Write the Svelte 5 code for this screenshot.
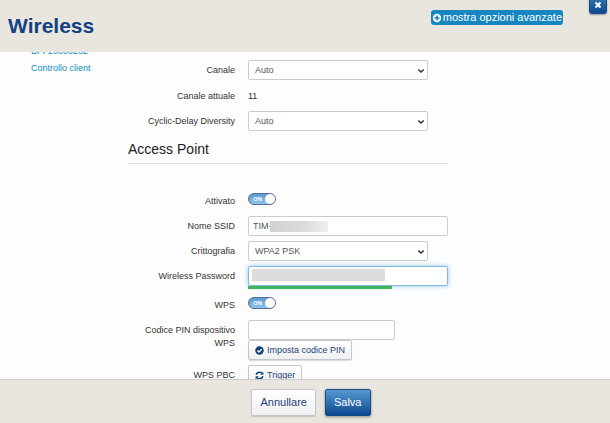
<script>
  let channel = $state('Auto');
  let diversity = $state('Auto');
  let encryption = $state('WPA2 PSK');
  let enabled = $state(true);
  let wps = $state(true);
  let ssid = $state('TIM-');
  let password = $state('');
  let pin = $state('');
  let strength = $state(72);
</script>

{#snippet chevron()}
  <svg class="chevron" viewBox="0 0 8 6" aria-hidden="true">
    <path d="M1.2 1.5 4 4l2.8-2.5" />
  </svg>
{/snippet}

<div class="modal">
  <header class="modal-header">
    <h1>Wireless</h1>
    <button type="button" class="advanced">
      <svg viewBox="0 0 12 12" aria-hidden="true">
        <circle cx="6" cy="6" r="5" />
        <path d="M6 3v6M3 6h6" />
      </svg>
      mostra opzioni avanzate
    </button>
    <button type="button" class="close" aria-label="Chiudi">
      <svg viewBox="0 0 8 8" aria-hidden="true">
        <path d="m1.5 1.5 5 5m0-5-5 5" />
      </svg>
    </button>
  </header>

  <main class="modal-body">
    <nav class="side">
      <a href="#network">BI-F20000202</a>
      <a href="#clients">Controllo client</a>
    </nav>

    <form class="settings" id="wireless-form">
      <div class="row">
        <label for="channel">Canale</label>
        <div class="select">
          <select id="channel" bind:value={channel}>
            <option>Auto</option>
          </select>
          {@render chevron()}
        </div>
      </div>
      <div class="row text-row">
        <span class="label">Canale attuale</span>
        <span class="value">11</span>
      </div>
      <div class="row">
        <label for="diversity">Cyclic-Delay Diversity</label>
        <div class="select">
          <select id="diversity" bind:value={diversity}>
            <option>Auto</option>
          </select>
          {@render chevron()}
        </div>
      </div>

      <h2>Access Point</h2>

      <div class="row">
        <label for="enabled">Attivato</label>
        <span class="switch">
          <input id="enabled" type="checkbox" bind:checked={enabled} />
          <span class="on">ON</span>
        </span>
      </div>
      <div class="row">
        <label for="ssid">Nome SSID</label>
        <div class="field">
          <input id="ssid" class="text" type="text" bind:value={ssid} />
          <span class="mask mask-ssid"></span>
        </div>
      </div>
      <div class="row">
        <label for="encryption">Crittografia</label>
        <div class="select">
          <select id="encryption" bind:value={encryption}>
            <option>WPA2 PSK</option>
          </select>
          {@render chevron()}
        </div>
      </div>
      <div class="row">
        <label for="password">Wireless Password</label>
        <div class="field">
          <input id="password" class="text active" type="text" bind:value={password} />
          <span class="mask mask-password"></span>
          <div class="meter"><div style={`width:${strength}%`}></div></div>
        </div>
      </div>
      <div class="row">
        <label for="wps">WPS</label>
        <span class="switch">
          <input id="wps" type="checkbox" bind:checked={wps} />
          <span class="on">ON</span>
        </span>
      </div>
      <div class="row">
        <label for="pin">Codice PIN dispositivo WPS</label>
        <div class="field">
          <input id="pin" class="text short" type="text" bind:value={pin} />
          <button type="button" class="btn small">
            <svg viewBox="0 0 10 10" aria-hidden="true">
              <circle class="fill" cx="5" cy="5" r="4.7" />
              <path class="tick" d="m2.7 5 1.7 1.7 3-3.2" />
            </svg>
            Imposta codice PIN
          </button>
        </div>
      </div>
      <div class="row">
        <label for="pbc">WPS PBC</label>
        <div class="field">
          <button id="pbc" type="button" class="btn small">
            <svg viewBox="0 0 10 10" aria-hidden="true">
              <path class="arrow" d="M1.2 4.2C1.8 2.3 3.2 1.3 5 1.3c1.2 0 2 .4 2.8 1.1M8.8 5.8C8.2 7.7 6.8 8.7 5 8.7c-1.2 0-2-.4-2.8-1.1" />
              <path class="fill" d="M9.3.8v3.4H5.9zM.7 9.2V5.8h3.4z" />
            </svg>
            Trigger
          </button>
        </div>
      </div>
    </form>
  </main>

  <footer class="modal-footer">
    <button type="button" class="btn">Annullare</button>
    <button type="submit" form="wireless-form" class="btn primary">Salva</button>
  </footer>
</div>

<style>
  :global(body) {
    background: #fdfdfd;
  }

  .modal {
    display: flex;
    flex-direction: column;
    height: 100vh;
    color: #333;
    font-family: 'Liberation Sans', Arial, sans-serif;
    font-size: 9px;
    line-height: 13px;
  }

  .modal * {
    box-sizing: border-box;
  }

  button,
  input,
  select {
    margin: 0;
    font-family: inherit;
    font-size: inherit;
    line-height: inherit;
  }

  button {
    cursor: pointer;
  }

  .modal-header {
    display: flex;
    align-items: flex-start;
    flex: none;
    height: 52px;
    padding: 0 3px 0 8px;
    background: #e9e6e0;
  }

  h1 {
    flex: 1;
    margin: 0;
    padding-top: 13px;
    color: #124281;
    font-size: 21px;
    line-height: 26px;
  }

  .advanced {
    display: flex;
    align-items: center;
    gap: 1px;
    height: 15px;
    margin: 10px 26px 0 0;
    padding: 0 1px;
    border: 0;
    border-radius: 3px;
    color: #fff;
    background: #1686c0;
    font-size: 11px;
  }

  .advanced svg {
    width: 10px;
    height: 10px;
  }

  .advanced circle {
    fill: #fff;
  }

  .advanced path {
    stroke: #1686c0;
    stroke-width: 2;
  }

  .close {
    display: flex;
    align-items: center;
    justify-content: center;
    width: 18px;
    height: 14px;
    padding: 0 0 3px;
    border: 1px solid #164b88;
    border-top: 0;
    border-radius: 0 0 3px 3px;
    background: linear-gradient(#2f6fae, #0d478e);
    box-shadow: 0 1px 2px rgba(0, 0, 0, 0.35);
  }

  .close svg {
    width: 8px;
    height: 8px;
  }

  .close path {
    stroke: #fff;
    stroke-width: 2;
  }

  .modal-body {
    display: flex;
    align-items: flex-start;
    flex: 1;
    min-height: 0;
    overflow: hidden;
  }

  /* list is scrolled part way under the header */
  .side {
    display: flex;
    flex-direction: column;
    gap: 4px;
    width: 128px;
    margin-top: -7px;
    padding-left: 31px;
  }

  .side a {
    color: #0f8cc2;
    text-decoration: none;
    white-space: nowrap;
  }

  .settings {
    width: 320px;
    padding-top: 8px;
  }

  .row {
    display: flex;
    align-items: flex-start;
    gap: 13px;
    min-height: 20px;
    margin-bottom: 5px;
  }

  .text-row {
    min-height: 21px;
  }

  .row label,
  .label {
    flex: none;
    width: 107px;
    padding-top: 4px;
    text-align: right;
  }

  .value {
    padding-top: 4px;
  }

  .text-row .label,
  .text-row .value {
    padding-top: 5px;
  }

  .field {
    position: relative;
    flex: 1;
  }

  .text {
    display: block;
    width: 100%;
    height: 20px;
    padding: 0 4px;
    border: 1px solid #ccc;
    border-radius: 2px;
    outline: 0;
    color: #555;
    background: #fff;
  }

  .text.active {
    border-color: #84b9de;
    box-shadow: 0 0 5px rgba(82, 168, 236, 0.6);
  }

  .text.short {
    width: 147px;
  }

  .mask {
    position: absolute;
    pointer-events: none;
  }

  .mask-ssid {
    top: 5px;
    left: 22px;
    width: 58px;
    height: 11px;
    background: linear-gradient(90deg, #d2d2d4, #dcdcdd 60%, #efefef);
  }

  .mask-password {
    top: 3px;
    left: 4px;
    width: 133px;
    height: 12px;
    background: #dcdcde;
  }

  .meter {
    height: 4px;
  }

  .meter div {
    height: 3px;
    background: #3db65b;
  }

  .select {
    position: relative;
    width: 180px;
  }

  select {
    display: block;
    width: 100%;
    height: 20px;
    padding: 0 16px 0 6px;
    border: 1px solid #ccc;
    border-radius: 2px;
    appearance: none;
    color: #555;
    background: #fff;
  }

  .chevron {
    position: absolute;
    top: 8px;
    right: 3px;
    width: 8px;
    height: 6px;
    pointer-events: none;
  }

  .chevron path {
    fill: none;
    stroke: #333;
    stroke-width: 1.5;
  }

  h2 {
    margin: 8px 0 27px;
    padding-bottom: 4px;
    border-bottom: 1px solid #ddd;
    color: #222;
    font-size: 14px;
    font-weight: 400;
    line-height: 20px;
  }

  .switch {
    position: relative;
    display: flex;
    margin-top: 2px;
  }

  .switch input {
    display: flex;
    align-items: center;
    width: 28px;
    height: 12px;
    border: 1px solid #52708f;
    border-radius: 6px;
    appearance: none;
    background: linear-gradient(#5b9bd0, #8fc3ea);
  }

  .switch input::before {
    content: '';
    width: 10px;
    height: 10px;
    border-radius: 50%;
    background: #fff;
  }

  .switch input:checked::before {
    margin-left: auto;
  }

  .on {
    position: absolute;
    top: 0;
    left: 5px;
    color: #fff;
    font-size: 6px;
    font-weight: 700;
    line-height: 12px;
    pointer-events: none;
  }

  .switch input:not(:checked) + .on {
    display: none;
  }

  .btn {
    height: 27px;
    padding: 0 8px;
    border: 1px solid #c3c6ce;
    border-radius: 2px;
    color: #1c4278;
    background: linear-gradient(#fff, #f0f0f2);
    box-shadow: 0 1px 1px rgba(0, 0, 0, 0.15);
    font-size: 11px;
  }

  .btn.small {
    display: flex;
    align-items: center;
    gap: 3px;
    height: 20px;
    padding: 0 6px;
    font-size: 9px;
  }

  .btn svg {
    width: 9px;
    height: 9px;
  }

  .fill {
    fill: #123f7b;
  }

  .tick,
  .arrow {
    fill: none;
    stroke: #fff;
    stroke-width: 1.6;
  }

  .arrow {
    stroke: #123f7b;
  }

  .btn.primary {
    border-color: #164b84;
    color: #fff;
    background: linear-gradient(#5799d0, #0c4890);
    box-shadow: 0 1px 3px rgba(0, 0, 0, 0.4);
  }

  .modal-footer {
    display: flex;
    align-items: center;
    justify-content: center;
    gap: 9px;
    flex: none;
    height: 44px;
    padding: 2px 0 0 12px;
    border-top: 1px solid #d0cdc7;
    background: #e9e6e0;
  }
</style>
